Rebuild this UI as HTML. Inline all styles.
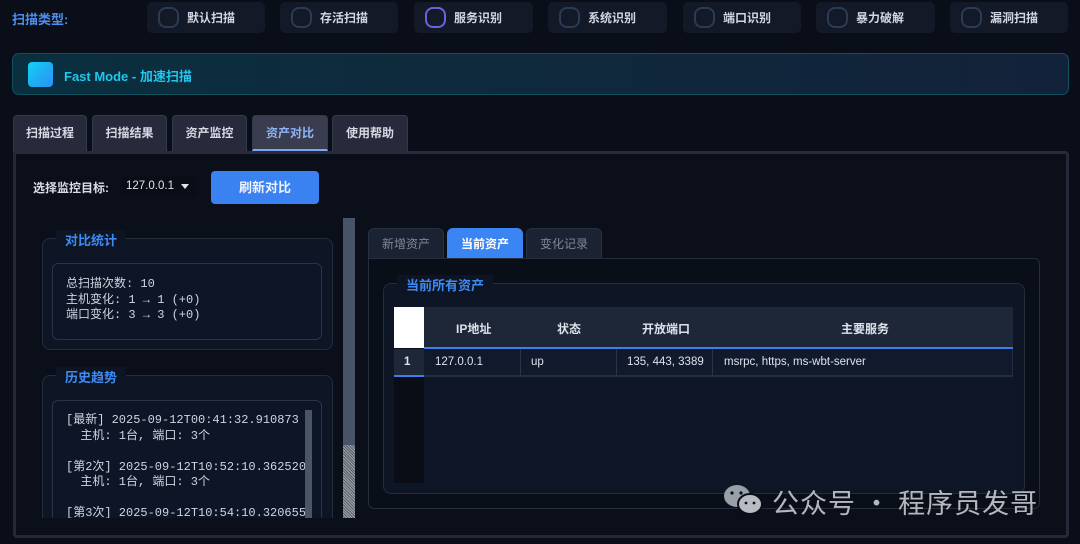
<!DOCTYPE html>
<html><head><meta charset="utf-8"><style>
*{box-sizing:border-box;margin:0;padding:0}
body{width:1080px;height:544px;background:#0a0e18;font-family:"Liberation Sans","Noto Sans CJK SC",sans-serif;color:#d8dde8;position:relative;overflow:hidden;font-size:12px}
.a{position:absolute}
.rb{position:absolute;top:2px;height:31px;background:#131927;border-radius:5px}
.rb i{position:absolute;left:11px;top:5px;width:21px;height:21px;border:2px solid #2a3b55;border-radius:8px}
.rb span{position:absolute;left:40px;top:7px;font-size:12px;font-weight:bold;color:#d0d6e2}
.tab{position:absolute;top:115px;height:36px;background:#262a3a;border:1px solid #33394b;border-bottom:none;border-radius:4px 4px 0 0;text-align:center;line-height:34px;font-size:12px;font-weight:bold;color:#d6dae4}
.gb{position:absolute;border:1px solid #252d3d;border-radius:8px;background:#0e1524}
.gt{position:absolute;background:#0d1424;color:#3d8bf5;font-weight:bold;font-size:13px;padding:0 9px}
.ib{position:absolute;border:1px solid #2a3446;border-radius:6px;background:#0d1526}
.mono{font-family:"Liberation Mono","Noto Sans CJK SC",monospace;font-size:12px;line-height:15.5px;color:#cfd5df}
.st{position:absolute;top:228px;height:31px;background:#1b2231;border:1px solid #283044;border-bottom:none;border-radius:6px 6px 0 0;text-align:center;line-height:30px;font-size:12px;color:#7f8898}
.th{position:absolute;top:320px;font-weight:bold;font-size:12px;color:#dde2ea}
.td{position:absolute;top:356px;font-size:11.5px;color:#dde2ea}
</style></head><body>
<div class="a" style="left:12px;top:9px;font-size:13px;font-weight:bold;color:#4d8ff0">扫描类型:</div>
<div class="rb" style="left:147px;width:118px"><i></i><span>默认扫描</span></div>
<div class="rb" style="left:280px;width:118px"><i></i><span>存活扫描</span></div>
<div class="rb" style="left:414px;width:119px"><i style="border-color:#6a63e0"></i><span>服务识别</span></div>
<div class="rb" style="left:548px;width:119px"><i></i><span>系统识别</span></div>
<div class="rb" style="left:683px;width:118px"><i></i><span>端口识别</span></div>
<div class="rb" style="left:816px;width:119px"><i></i><span>暴力破解</span></div>
<div class="rb" style="left:950px;width:118px"><i></i><span>漏洞扫描</span></div>

<div class="a" style="left:12px;top:53px;width:1057px;height:42px;border:1px solid #12505e;border-radius:7px;background:linear-gradient(90deg,#0a3040,#0e2a3c 40%,#12223a)"></div>
<div class="a" style="left:28px;top:62px;width:25px;height:25px;border-radius:4px;background:linear-gradient(135deg,#12d0f5,#2b8ff3)"></div>
<div class="a" style="left:64px;top:66px;font-size:13px;font-weight:bold;color:#1ec8ee">Fast Mode - 加速扫描</div>

<div class="tab" style="left:13px;width:74px">扫描过程</div>
<div class="tab" style="left:92px;width:75px">扫描结果</div>
<div class="tab" style="left:172px;width:75px">资产监控</div>
<div class="tab" style="left:252px;width:76px;background:#3a3d50;color:#8fb4f5;border-bottom:2px solid #7aa6f5">资产对比</div>
<div class="tab" style="left:332px;width:76px">使用帮助</div>

<div class="a" style="left:13px;top:151px;width:1056px;height:387px;border:3px solid #28283a;border-top-color:#2b2a3c;border-radius:0 4px 4px 4px;background:#0b0f1a"></div>

<div class="a" style="left:33px;top:179px;font-size:12px;font-weight:bold;color:#d8dde6">选择监控目标:</div>
<div class="a" style="left:122px;top:177px;width:74px;height:19px;background:#0a0d16;font-size:11.5px;line-height:19px;padding-left:4px;color:#e0e4ec">127.0.0.1</div>
<div class="a" style="left:181px;top:184px;width:0;height:0;border-left:4px solid transparent;border-right:4px solid transparent;border-top:5px solid #e0e4ec"></div>
<div class="a" style="left:211px;top:171px;width:108px;height:33px;background:#3a82f2;border-radius:4px;text-align:center;line-height:33px;font-size:13px;font-weight:bold;color:#eef3ff">刷新对比</div>

<div class="gb" style="left:42px;top:238px;width:291px;height:112px"></div>
<div class="gt" style="left:56px;top:230px">对比统计</div>
<div class="ib mono" style="left:52px;top:263px;width:270px;height:77px;padding:13px 13px">总扫描次数: 10<br>主机变化: 1 → 1 (+0)<br>端口变化: 3 → 3 (+0)</div>

<div class="gb" style="left:42px;top:375px;width:291px;height:160px;border-bottom:none"></div>
<div class="gt" style="left:56px;top:367px">历史趋势</div>
<div class="ib mono" style="left:52px;top:400px;width:270px;height:130px;padding:12px 13px;overflow:hidden;border-bottom:none">[最新] 2025-09-12T00:41:32.910873<br>&nbsp;&nbsp;主机: 1台, 端口: 3个<br><br>[第2次] 2025-09-12T10:52:10.362520<br>&nbsp;&nbsp;主机: 1台, 端口: 3个<br><br>[第3次] 2025-09-12T10:54:10.320655</div>
<div class="a" style="left:305px;top:410px;width:7px;height:108px;background:#4a5668"></div>
<div class="a" style="left:16px;top:518px;width:1050px;height:17px;background:#0b0f1a"></div>

<div class="a" style="left:343px;top:218px;width:12px;height:300px;background:#475467"></div>
<div class="a" style="left:343px;top:445px;width:12px;height:73px;background:repeating-linear-gradient(45deg,#9aa0a8 0 1px,#5a6068 1px 2px)"></div>

<div class="st" style="left:368px;width:76px">新增资产</div>
<div class="st" style="left:447px;width:76px;background:#3a84f3;border-color:#3a84f3;color:#fff;font-weight:bold">当前资产</div>
<div class="st" style="left:526px;width:76px">变化记录</div>
<div class="a" style="left:368px;top:258px;width:672px;height:251px;border:1px solid #252d3d;border-radius:0 6px 6px 6px;background:#0a0e18"></div>
<div class="gb" style="left:383px;top:283px;width:642px;height:211px"></div>
<div class="gt" style="left:397px;top:275px">当前所有资产</div>

<div class="a" style="left:394px;top:307px;width:619px;height:176px;background:#0e1628"></div>
<div class="a" style="left:394px;top:307px;width:30px;height:176px;background:#0a0d16"></div>
<div class="a" style="left:424px;top:307px;width:589px;height:41px;background:#1e2738"></div>
<div class="a" style="left:394px;top:307px;width:30px;height:41px;background:#fff"></div>
<div class="a" style="left:424px;top:347px;width:589px;height:2px;background:#3a7ef0"></div>
<div class="a" style="left:394px;top:349px;width:619px;height:28px;background:#111a2c;border-bottom:2px solid #252e3e;border-right:1px solid #252e3e"></div>
<div class="a" style="left:394px;top:349px;width:30px;height:28px;background:#1e2738;border-bottom:2px solid #3a7ef0"></div>
<div class="a" style="left:520px;top:349px;width:1px;height:28px;background:#2a3446"></div>
<div class="a" style="left:616px;top:349px;width:1px;height:28px;background:#2a3446"></div>
<div class="a" style="left:712px;top:349px;width:1px;height:28px;background:#2a3446"></div>
<div class="th" style="left:456px">IP地址</div>
<div class="th" style="left:557px">状态</div>
<div class="th" style="left:642px">开放端口</div>
<div class="th" style="left:841px">主要服务</div>
<div class="td" style="left:404px;font-weight:bold">1</div>
<div class="td" style="left:435px">127.0.0.1</div>
<div class="td" style="left:531px">up</div>
<div class="td" style="left:627px">135, 443, 3389</div>
<div class="td" style="left:724px">msrpc, https, ms-wbt-server</div>

<svg class="a" style="left:722px;top:482px" width="44" height="36" viewBox="0 0 44 36"><ellipse cx="15" cy="14" rx="13" ry="11" fill="#9aa0a8"/><ellipse cx="28" cy="22" rx="12" ry="10" fill="#b8bcc2" stroke="#0a0e18" stroke-width="2"/><circle cx="10" cy="11" r="1.6" fill="#0a0e18"/><circle cx="19" cy="11" r="1.6" fill="#0a0e18"/><circle cx="24" cy="21" r="1.4" fill="#0a0e18"/><circle cx="32" cy="21" r="1.4" fill="#0a0e18"/></svg>
<div class="a" style="left:772px;top:482px;font-size:27px;color:#b4b8be;font-family:'Noto Sans CJK SC',sans-serif;letter-spacing:1px">公众号 · 程序员发哥</div>
</body></html>
